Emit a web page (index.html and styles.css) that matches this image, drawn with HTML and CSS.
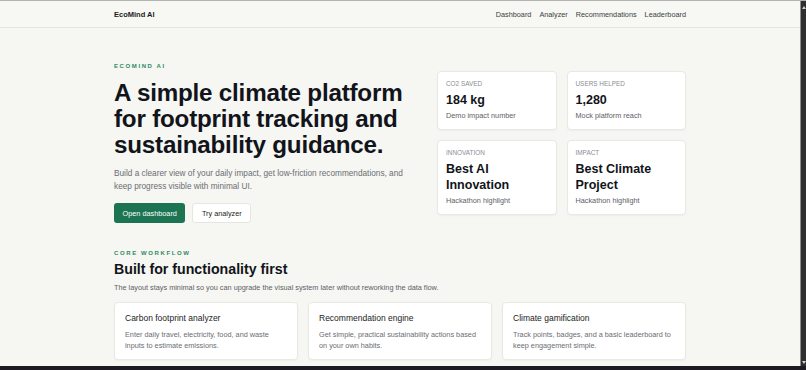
FILE: index.html
```html
<!DOCTYPE html>
<html lang="en">
<head>
    <meta charset="UTF-8" />
    <meta name="viewport" content="width=device-width, initial-scale=1.0"/>
    <title>EcoMind AI</title>
    <link rel="stylesheet" href="styles.css">
</head>
<body>
    <div class="screen">
        <div class="page">
            <!-- TOP BAR -->
            <header class="topbar">
                <div class="wrap topbar-inner">
                    <a href="#" class="brand">EcoMind AI</a>
                    <nav class="nav">
                        <a href="#">Dashboard</a>
                        <a href="#">Analyzer</a>
                        <a href="#">Recommendations</a>
                        <a href="#">Leaderboard</a>
                    </nav>
                </div>
            </header>

            <main class="wrap">
                <!-- HERO -->
                <section class="hero">
                    <div class="hero-copy">
                        <p class="eyebrow">EcoMind AI</p>
                        <h1>A simple climate platform for footprint tracking and sustainability guidance.</h1>
                        <p class="lead">Build a clearer view of your daily impact, get low-friction recommendations, and keep progress visible with minimal UI.</p>
                        <div class="actions">
                            <a href="#" class="btn btn-primary">Open dashboard</a>
                            <a href="#" class="btn btn-ghost">Try analyzer</a>
                        </div>
                    </div>

                    <div class="stats">
                        <div class="stat-card">
                            <p class="stat-label">CO2 saved</p>
                            <p class="stat-value">184 kg</p>
                            <p class="stat-note">Demo impact number</p>
                        </div>
                        <div class="stat-card">
                            <p class="stat-label">Users helped</p>
                            <p class="stat-value">1,280</p>
                            <p class="stat-note">Mock platform reach</p>
                        </div>
                        <div class="stat-card">
                            <p class="stat-label">Innovation</p>
                            <p class="stat-value">Best AI Innovation</p>
                            <p class="stat-note">Hackathon highlight</p>
                        </div>
                        <div class="stat-card">
                            <p class="stat-label">Impact</p>
                            <p class="stat-value">Best Climate Project</p>
                            <p class="stat-note">Hackathon highlight</p>
                        </div>
                    </div>
                </section>

                <!-- CORE WORKFLOW -->
                <section class="workflow">
                    <p class="eyebrow">Core workflow</p>
                    <h2>Built for functionality first</h2>
                    <p class="section-text">The layout stays minimal so you can upgrade the visual system later without reworking the data flow.</p>
                    <div class="features">
                        <div class="feature">
                            <h3>Carbon footprint analyzer</h3>
                            <p>Enter daily travel, electricity, food, and waste inputs to estimate emissions.</p>
                        </div>
                        <div class="feature">
                            <h3>Recommendation engine</h3>
                            <p>Get simple, practical sustainability actions based on your own habits.</p>
                        </div>
                        <div class="feature">
                            <h3>Climate gamification</h3>
                            <p>Track points, badges, and a basic leaderboard to keep engagement simple.</p>
                        </div>
                    </div>
                </section>
            </main>
        </div>

        <!-- window scrollbar -->
        <div class="scrollbar">
            <span class="arrow arrow-up"></span>
            <span class="arrow arrow-down"></span>
        </div>
    </div>
    <div class="taskbar"></div>
</body>
</html>
```

FILE: styles.css
```css
* {
    margin: 0;
    padding: 0;
    box-sizing: border-box;
    font-family: 'Liberation Sans', Arial, Helvetica, sans-serif;
}

body {
    height: 370px;
    overflow: hidden;
    display: flex;
    flex-direction: column;
    border-top: 1px solid #b3b3b0;
    background: #f6f6f2;
    color: #15171c;
}

.screen {
    flex: 1;
    display: flex;
    min-height: 0;
}

.page {
    flex: 1;
    overflow: hidden;
    background: #f6f6f2;
}

.scrollbar {
    width: 6px;
    background: #2e2e2e;
    border-left: 1px solid #8d8d8d;
    display: flex;
    flex-direction: column;
    justify-content: space-between;
    align-items: center;
    padding: 5px 0 2px;
}

.arrow {
    width: 0;
    height: 0;
    border-left: 2px solid transparent;
    border-right: 2px solid transparent;
}

.arrow-up {
    border-bottom: 3px solid #cfcfcf;
}

.arrow-down {
    border-top: 3px solid #cfcfcf;
}

.taskbar {
    height: 4px;
    background: #1e1a23;
}

.wrap {
    width: 572px;
    margin: 0 auto;
}

a {
    text-decoration: none;
    color: inherit;
}

/* top bar */
.topbar {
    border-bottom: 1px solid #e6e6e1;
    background: #f7f7f3;
}

.topbar-inner {
    height: 26px;
    display: flex;
    align-items: center;
    justify-content: space-between;
}

.brand {
    font-size: 7.5px;
    font-weight: bold;
    color: #1c1c1c;
}

.nav {
    display: flex;
    gap: 8px;
}

.nav a {
    font-size: 7.3px;
    color: #3c3f44;
}

/* hero */
.hero {
    display: grid;
    grid-template-columns: 1fr 249px;
    gap: 20px;
    align-items: center;
    padding-top: 34px;
}

.eyebrow {
    font-size: 6px;
    line-height: 8px;
    font-weight: bold;
    letter-spacing: 1.6px;
    text-transform: uppercase;
    color: #2f8a62;
    margin-bottom: 10px;
}

.hero h1 {
    font-size: 24.2px;
    line-height: 26px;
    letter-spacing: -0.2px;
    font-weight: bold;
    color: #11141a;
    margin-bottom: 10px;
}

.lead {
    font-size: 8.25px;
    line-height: 12.5px;
    color: #6b6e73;
    margin-bottom: 10px;
}

.actions {
    display: flex;
    gap: 7px;
}

.btn {
    height: 20px;
    display: inline-flex;
    align-items: center;
    padding: 0 8.5px;
    border-radius: 3px;
    font-size: 7.3px;
}

.btn-primary {
    background: #1c7452;
    color: white;
}

.btn-ghost {
    background: white;
    color: #1b1d22;
    border: 1px solid #e6e6e1;
}

.stats {
    display: grid;
    grid-template-columns: 1fr 1fr;
    gap: 10px;
}

.stat-card {
    background: white;
    border: 1px solid #e9e9e4;
    border-radius: 4px;
    padding: 8px;
    box-shadow: 0 1px 2px rgba(0, 0, 0, 0.04);
}

.stat-label {
    font-size: 6.4px;
    line-height: 8px;
    text-transform: uppercase;
    color: #8a8d92;
    margin-bottom: 4px;
}

.stat-value {
    font-size: 12.5px;
    line-height: 16px;
    font-weight: bold;
    color: #121419;
    margin-bottom: 3px;
}

.stat-note {
    font-size: 7.3px;
    line-height: 10px;
    color: #5d6066;
}

/* core workflow */
.workflow {
    margin-top: 26px;
}

.workflow .eyebrow {
    margin-bottom: 4px;
}

.workflow h2 {
    font-size: 14.2px;
    line-height: 17px;
    font-weight: bold;
    color: #121419;
    margin-bottom: 5px;
}

.section-text {
    font-size: 7.3px;
    line-height: 10px;
    color: #5d6066;
    margin-bottom: 9px;
}

.features {
    display: grid;
    grid-template-columns: repeat(3, 1fr);
    gap: 10px;
}

.feature {
    background: white;
    border: 1px solid #e9e9e4;
    border-radius: 4px;
    padding: 10px 10px 8px;
    box-shadow: 0 1px 2px rgba(0, 0, 0, 0.04);
}

.feature h3 {
    font-size: 8.5px;
    line-height: 11px;
    font-weight: normal;
    color: #1b1d22;
    margin-bottom: 5px;
}

.feature p {
    font-size: 7.3px;
    line-height: 11px;
    color: #6b6e73;
}
```
